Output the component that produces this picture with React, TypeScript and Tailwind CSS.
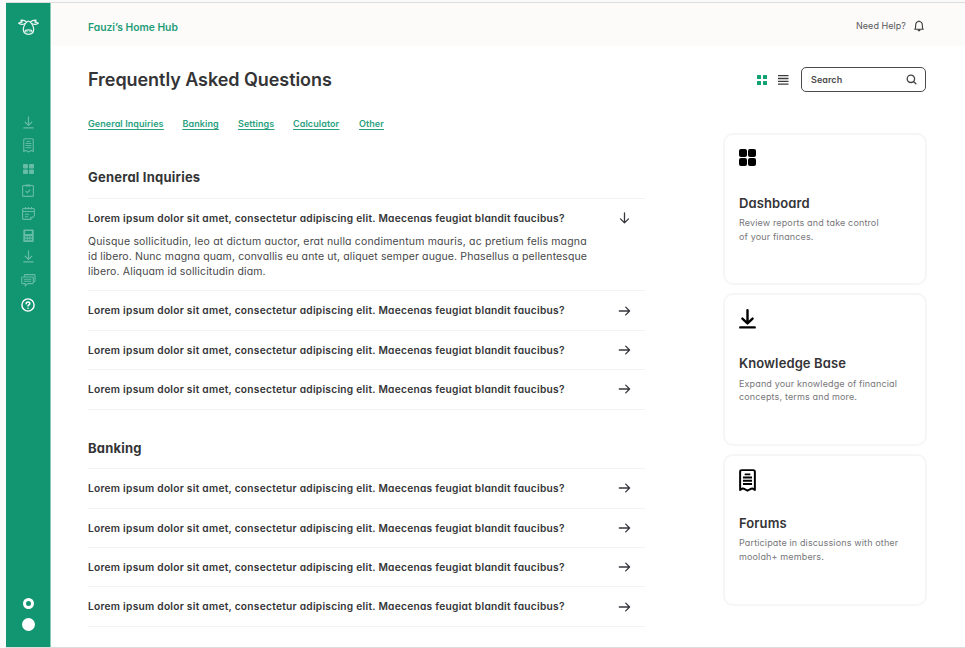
import React from "react";

const QUESTION =
  "Lorem ipsum dolor sit amet, consectetur adipiscing elit. Maecenas feugiat blandit faucibus?";

function CowLogo() {
  return (
    <svg width="21" height="16" viewBox="0 0 21 16" fill="none" stroke="#e6f5f0" strokeWidth="1.2" strokeLinecap="round" strokeLinejoin="round">
      <path d="M8.600 3C7.400 1.700 5.300 1.100 3 1.200c0 .9.400 1.500 1.200 1.900C2.800 3.100 1.600 3.500.7 4.300c1.900 1.300 4.600 1.400 6.400.2" />
      <path d="M12.400 3c1.200-1.300 3.300-1.900 5.600-1.800 0 .9-.4 1.500-1.200 1.900 1.400 0 2.600.4 3.500 1.200-1.900 1.300-4.600 1.400-6.400.2" />
      <path d="M10.500 2C8 3 5.300 6.800 5.300 10.600c0 2.900 2 4.700 5.200 4.700s5.200-1.800 5.200-4.700C15.700 6.800 13 3 10.500 2z" />
      <path d="M7 12.700c0-2.400 7-2.400 7 0M9 12.500v.3M12 12.500v.3" />
    </svg>
  );
}

function Download({ size = 12, sw = 1.3 }: { size?: number; sw?: number }) {
  return (
    <svg width={size} height={(size * 14) / 12} viewBox="0 0 12 14" fill="none" stroke="currentColor" strokeWidth={sw} strokeLinecap="round" strokeLinejoin="round">
      <path d="M6 .9v9M2.400 6.800 6 10.200l3.600-3.400M.9 13h10.200" />
    </svg>
  );
}

function Receipt({ size = 12, sw = 1.2 }: { size?: number; sw?: number }) {
  return (
    <svg width={size} height={(size * 16) / 12} viewBox="0 0 12 16" fill="none" stroke="currentColor" strokeWidth={sw} strokeLinejoin="round">
      <path d="M.8 14.800V2Q.8.800 2 .8h8q1.200 0 1.200 1.200v12.800L9.300 13.700l-1.500.6L6 15.300 4.200 14.300l-1.500-.6z" />
      <path d="M4 3.800h4M2.800 6h6.400M2.800 8.300h6.400M2.800 10.600h6.400" strokeWidth={sw * 0.9} />
    </svg>
  );
}

function Grid({ w = 11, h = 10, gap = 1, r = 1 }: { w?: number; h?: number; gap?: number; r?: number }) {
  const cw = (w - gap) / 2;
  const ch = (h - gap) / 2;
  return (
    <svg width={w} height={h} fill="currentColor">
      <rect width={cw} height={ch} rx={r} />
      <rect x={cw + gap} width={cw} height={ch} rx={r} />
      <rect y={ch + gap} width={cw} height={ch} rx={r} />
      <rect x={cw + gap} y={ch + gap} width={cw} height={ch} rx={r} />
    </svg>
  );
}

function Clipboard() {
  return (
    <svg width="12" height="13" viewBox="0 0 12 13" fill="none" stroke="currentColor" strokeWidth="1.1">
      <rect x=".6" y="1.500" width="10.800" height="10.900" rx=".8" />
      <path d="M3.500 1.500h5" strokeWidth="2" />
      <path d="m3.700 7 1.600 1.600 3-3" />
    </svg>
  );
}

function Calendar() {
  return (
    <svg width="13" height="13" viewBox="0 0 13 13" fill="none" stroke="currentColor" strokeWidth="1.1">
      <path d="M9.500 12.400H1.600q-1 0-1-1V2.500q0-1 1-1h9.800q1 0 1 1v6.800M.6 4.500h11.800M3.500 0v2.500M6.500 0v2.500M9.500 0v2.500M3 7.300h4M3 9.800h3M8 10l1.200 1.100 2.900-1.500" />
    </svg>
  );
}

function Calculator() {
  return (
    <svg width="11" height="13" viewBox="0 0 11 13">
      <path fill="currentColor" fillRule="evenodd" d="M1 .5h9q.7 0 .7.7v11q0 .8-.7.8H1q-.7 0-.7-.8v-11Q.3.500 1 .500zM2.200 2v3h6.600V2zM2.200 7v1.500h1.600V7zm2.600 0v1.500h1.500V7zm2.500 0v1.500h1.500V7zM2.200 9.800v1.500h1.600V9.800zm2.600 0v1.500h1.500V9.800zm2.500 0v1.500h1.500V9.800z" />
    </svg>
  );
}

function Messages() {
  return (
    <svg width="15" height="13" viewBox="0 0 15 13" fill="none" stroke="currentColor" strokeWidth="1.100" strokeLinejoin="round">
      <path d="M3.500 2.800V1.300q0-.7.700-.7h9q.8 0 .8.700V7q0 .8-1.500.8" />
      <path d="M1.500 3h10q.8 0 .8.800v5q0 .8-.8.800H6.500L4.300 12V9.600H1.500q-.8 0-.8-.8v-5Q.7 3 1.500 3zM2.800 5.300h7.500M2.800 7.300h7.500" />
    </svg>
  );
}

function Help() {
  return (
    <svg width="14" height="14" viewBox="0 0 14 14" fill="none" stroke="#fff" strokeLinecap="round">
      <circle cx="7" cy="7" r="6.100" strokeWidth="1.400" />
      <path d="M5.200 5.700C5.200 3.200 9 3.500 8.800 5.600 8.700 6.900 7 6.800 7 8.100M7 10.200v.1" strokeWidth="1.500" />
    </svg>
  );
}

function Arrow({ down = false }: { down?: boolean }) {
  return (
    <svg className="-mt-px" width="14" height="12" viewBox="0 0 14 12" fill="none" stroke="#36363c" strokeWidth="1.300" strokeLinecap="round" strokeLinejoin="round">
      {down ? <path d="M7.500 1v9.800M3.500 6.900l4 4 4-4" /> : <path d="M2.300 6h10.300M8.700 2.100 12.600 6l-3.900 3.900" />}
    </svg>
  );
}

function Question({ answer }: { answer?: string[] }) {
  return (
    <li className="border-b border-[#f4f3f1]">
      <div className="flex h-[38.4px] items-center justify-between pr-[14px] pt-[1px] text-[10.2px] font-semibold tracking-[0.26px] text-[#343436]">
        <span className="whitespace-nowrap">{QUESTION}</span>
        <Arrow down={!!answer} />
      </div>
      {answer && (
        <p className="-mt-[3px] pb-[11px] text-[10.500px] leading-[15px] tracking-[0.14px] text-[#48484a]">
          {answer.map((line) => (
            <span key={line} className="block whitespace-nowrap first:tracking-[0.17px] even:tracking-[0.12px]">{line}</span>
          ))}
        </p>
      )}
    </li>
  );
}

function Card({ icon, title, lines }: { icon: React.ReactNode; title: string; lines: string[] }) {
  return (
    <article className="h-[152.4px] w-[204px] rounded-[10px] border-2 border-[#f6f6f6] bg-white pl-[14px] pt-[14px]">
      <div className="h-[44px] text-black">{icon}</div>
      <h3 className="whitespace-nowrap text-[13px] font-semibold leading-[20px] tracking-[0.1px] text-[#343436]">{title}</h3>
      <p className="mt-[3.500px] text-[9px] leading-[13.700px] tracking-[0.14px] text-[#77777a]">
        {lines.map((line) => (
          <span key={line} className="block whitespace-nowrap">{line}</span>
        ))}
      </p>
    </article>
  );
}

export default function App() {
  return (
    <div className="h-[648px] w-[965px] overflow-hidden bg-[#fafafa] pl-[6px] pt-[2px] font-['Inter','Open_Sans',sans-serif] [font-feature-settings:'cv11']">
      <div className="flex h-[646px] border-y border-[#dddddd] bg-white">
        <aside className="flex w-[45px] shrink-0 flex-col items-center border-r border-[#8bcab7] bg-[#129672] pt-[16px]">
          <CowLogo />
          <nav className="mt-[76px] flex flex-col text-[#66bca4]">
            <span className="flex h-[23px] w-[44px] items-center justify-center"><Download size={11} sw={1.3} /></span>
            <span className="flex h-[23px] items-center justify-center"><Receipt size={11} sw={1.2} /></span>
            <span className="flex h-[23px] items-center justify-center"><Grid /></span>
            <span className="flex h-[21px] items-center justify-center"><Clipboard /></span>
            <span className="flex h-[24px] items-center justify-center"><Calendar /></span>
            <span className="flex h-[20px] items-center justify-center"><Calculator /></span>
            <span className="flex h-[23px] items-center justify-center"><Download size={11} sw={1.3} /></span>
            <span className="flex h-[24px] items-center justify-center"><Messages /></span>
            <span className="flex h-[25px] items-center justify-center"><Help /></span>
          </nav>
          <div className="mb-[16px] mt-auto flex flex-col items-center gap-[9px]">
            <span className="size-[11px] rounded-full border-[3px] border-white" />
            <span className="size-[13px] rounded-full bg-white" />
          </div>
        </aside>
        <div className="flex min-w-0 flex-1 flex-col">
          <header className="flex h-[43px] shrink-0 items-center justify-between bg-[#fcfbf9] pl-[37px] pr-[41px] pt-[6px]">
            <span className="text-[10.300px] font-semibold text-[#249b78]">Fauzi’s Home Hub</span>
            <div className="flex items-center gap-[8px] pb-[3px] text-[9px] tracking-[0.05px] text-[#57575a]">
              <span>Need Help?</span>
              <svg width="10" height="12" viewBox="0 0 10 12" fill="none" stroke="#363638" strokeWidth="1.100" strokeLinejoin="round">
                <path d="M5 .5v1M.8 9.300h8.400C8.300 8.300 8.300 7 8.300 5.200 8.300 2.900 7 1.500 5 1.500S1.700 2.900 1.700 5.200C1.700 7 1.700 8.300.8 9.300zM3.800 10.200q1.200 1.300 2.400 0" />
              </svg>
            </div>
          </header>
          <div className="flex h-[66px] shrink-0 items-center justify-between pl-[37px] pr-[39px]">
            <h1 className="whitespace-nowrap text-[18px] font-semibold tracking-[-0.06px] text-[#343436]">Frequently Asked Questions</h1>
            <div className="flex items-center pt-[1px]">
              <span className="text-[#11a273]"><Grid w={10} h={10} gap={2} r={0.6} /></span>
              <svg className="ml-[11px]" width="11" height="10" stroke="#3c3c3e" strokeWidth="1.300">
                <path d="M0 .7h10.500M0 3.500h10.500M0 6.400h10.500M0 9.200h10.500" />
              </svg>
              <label className="ml-[12px] flex h-[25px] w-[125px] items-center justify-between rounded-[5px] border-[1.500px] border-[#4b4b4d] pl-[9px] pr-[8px]">
                <span className="text-[9px] font-semibold tracking-[0.05px] text-[#4b4b4d]">Search</span>
                <svg width="11" height="11" viewBox="0 0 11 11" fill="none" stroke="#444446" strokeWidth="1.300" strokeLinecap="round">
                  <circle cx="4.900" cy="4.800" r="3.700" />
                  <path d="m7.700 7.700 2.200 2.100" />
                </svg>
              </label>
            </div>
          </div>
          <div className="flex pl-[37px]">
            <main className="w-[557px] shrink-0">
              <nav className="flex h-[24px] items-center whitespace-nowrap text-[9px] font-semibold tracking-[0.08px] text-[#2b9f7e] underline underline-offset-[1.5px]">
                <a className="w-[94.500px]">General Inquiries</a>
                <a className="w-[55.500px]">Banking</a>
                <a className="w-[55px]">Settings</a>
                <a className="w-[66px]">Calculator</a>
                <a>Other</a>
              </nav>
              <h2 className="mt-[31px] h-[32px] border-b border-[#f4f3f1] text-[13px] font-bold leading-[20px] tracking-[0.22px] text-[#343436]">General Inquiries</h2>
              <ul>
                <Question
                  answer={[
                    "Quisque sollicitudin, leo at dictum auctor, erat nulla condimentum mauris, ac pretium felis magna",
                    "id libero. Nunc magna quam, convallis eu ante ut, aliquet semper augue. Phasellus a pellentesque",
                    "libero. Aliquam id sollicitudin diam.",
                  ]}
                />
                <Question />
                <Question />
                <Question />
              </ul>
              <h2 className="mt-[28px] h-[31.6px] border-b border-[#f4f3f1] text-[13px] font-bold leading-[20px] tracking-[0.22px] text-[#343436]">Banking</h2>
              <ul>
                <Question />
                <Question />
                <Question />
                <Question />
              </ul>
            </main>
            <aside className="ml-[78px] mt-[20.600px] flex flex-col gap-[8.300px]">
              <Card icon={<Grid w={17} h={17} gap={1} r={2} />} title="Dashboard" lines={["Review reports and take control", "of your finances."]} />
              <Card icon={<Download size={17} sw={1.700} />} title="Knowledge Base" lines={["Expand your knowledge of financial", "concepts, terms and more."]} />
              <Card icon={<div className="-mt-px"><Receipt size={17} sw={1.400} /></div>} title="Forums" lines={["Participate in discussions with other", "moolah+ members."]} />
            </aside>
          </div>
        </div>
      </div>
    </div>
  );
}
